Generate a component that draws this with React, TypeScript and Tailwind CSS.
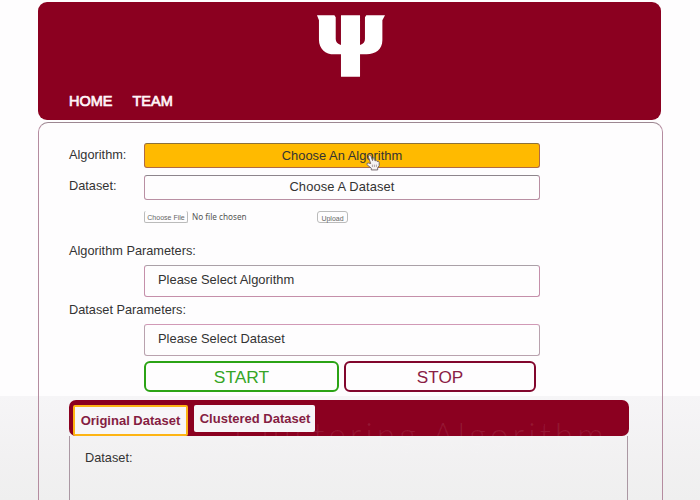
import React from "react";

const field = "box-border w-[396px] rounded-[3px] border text-[#333] text-[12.9px]";

function Logo() {
  return (
    <svg width="69" height="63" viewBox="0 0 210 189" preserveAspectRatio="none" className="block" fill="#fff" aria-hidden="true">
      <path d="M3 1H56L60 7V72Q60 86 76 90V1H134V90Q149 86 149 72V7L153 1H210L202 16V76C202 103 181 118 154 118H134V185H76V118H56C28 118 9 101 9 74V16Z" />
    </svg>
  );
}

function Cursor() {
  return (
    <svg className="absolute left-[221px] top-[10px]" width="14" height="17" viewBox="0 0 12 16" preserveAspectRatio="none" aria-hidden="true">
      <path
        d="M4 9L2.2 3.2Q1.8 1.4 2.8 1.1T4.3 2.2L5.6 6.2Q7-.2 7.7 6.5Q8.9 5.2 9.5 7Q11 6.2 11.3 8V11L10 13V15H4.5V13.3L.8 10Q.5 8.4 2.1 8.5Z"
        fill="#f6f3f2"
        stroke="#685b62"
        strokeWidth=".8"
      />
      <path d="M5.5 10V12.3M7.2 10V12.3M8.9 10V12.3" stroke="#8b7d83" strokeWidth=".6" />
    </svg>
  );
}

export default function App() {
  return (
    <div className="h-[500px] w-[700px] overflow-hidden bg-[linear-gradient(to_bottom,#fefdfe_0,#fefdfe_396px,#f6f5f7_396px,#f2f1f2_455px,#efefef_500px)] pl-[38px] pt-[2px] font-['Liberation_Sans',Arial,sans-serif] text-[12.75px] leading-[16px] text-[#333]">
      <header className="flex h-[118px] w-[623px] flex-col rounded-[9px] bg-[#8b0020]">
        <div className="pl-[278px] pt-[13px]">
          <Logo />
        </div>
        <nav className="mt-[14px] flex gap-[20px] pl-[31px] text-[14.5px] leading-[18px] text-[#fff4f7] [-webkit-text-stroke:0.7px_#fff4f7]">
          <span>HOME</span>
          <span>TEAM</span>
        </nav>
      </header>

      <main className="mt-[2px] h-[400px] w-[625px] rounded-[10px] border border-[#b58ca0] border-t-[#9d8792] pl-[30px] pt-[20px]">
        <div className="flex h-[25px]">
          <span className="w-[75px] pt-[4px]">Algorithm:</span>
          <div className={`${field} relative h-[25px] border-[#b06a45] border-t-[#8c713b] bg-[#ffba00] text-center leading-[24px]`}>
            Choose An Algorithm
            <Cursor />
          </div>
        </div>
        <div className="mt-[7px] flex h-[25px]">
          <span className="w-[75px] pt-[3px]">Dataset:</span>
          <div className={`${field} h-[25px] border-[#b98fa3] border-t-[#8d858c] text-center leading-[22px] tracking-[0.12px]`}>
            Choose A Dataset
          </div>
        </div>

        <div className="mt-[11px] flex h-[14px] items-start pl-[75px] text-[7px] text-[#666]">
          <span className="h-[12px] w-[44px] rounded-[2px] border border-t-0 border-[#bbb] text-center leading-[14px]">
            Choose File
          </span>
          <span className="ml-[4px] w-[125px] font-['Noto_Sans',sans-serif] text-[8.2px] leading-[12px] text-[#555]">No file chosen</span>
          <span className="h-[12px] w-[31px] rounded-[3px] border border-[#bbb] text-center leading-[13px]">
            Upload
          </span>
        </div>

        <div className="mt-[18px]">Algorithm Parameters:</div>
        <div className={`${field} ml-[75px] mt-[6px] h-[32px] border-[#c58faa] border-t-[#aaa0a7] pl-[13px] leading-[28px]`}>
          Please Select Algorithm
        </div>
        <div className="mt-[5px]">Dataset Parameters:</div>
        <div className={`${field} ml-[75px] mt-[6px] h-[32px] border-[#b9a2ae] border-t-[#d199b6] pl-[13px] leading-[28px]`}>
          Please Select Dataset
        </div>

        <div className="ml-[75px] mt-[5px] flex gap-[5px] text-center text-[17.4px] leading-[28px]">
          <div className="h-[31px] w-[195px] rounded-[6px] border-2 border-[#2ba315] text-[#36a526]">START</div>
          <div className="h-[31px] w-[192px] rounded-[6px] border-2 border-[#82062d] text-[17.2px] text-[#8a2045]">STOP</div>
        </div>

        <section className="mt-[8px] h-[120px] w-[560px]">
          <div className="relative flex h-[35.5px] items-start rounded-[7px] bg-[#8b0020] pl-[4px] pt-[5px] text-[13px] font-bold text-[#851d42]">
            <span className="absolute right-[21px] top-[14px] whitespace-nowrap font-['Lato',sans-serif] text-[33px] font-light leading-[40px] tracking-[4.1px] text-white/[0.09]">
              Clustering Algorithm
            </span>
            <div className="relative h-[31px] w-[115px] rounded-[2px] border-2 border-[#fdb414] bg-[#f7f6f8] text-center leading-[27px]">
              Original Dataset
            </div>
            <div className="relative ml-[6px] h-[27px] w-[121px] rounded-[2px] bg-[#f7f5f8] pl-[1px] text-center leading-[27px]">
              Clustered Dataset
            </div>
          </div>
          <div className="h-[84px] w-[559px] border-x border-[#ab98a3] pl-[15px] pt-[14px]">Dataset:</div>
        </section>
      </main>
    </div>
  );
}
